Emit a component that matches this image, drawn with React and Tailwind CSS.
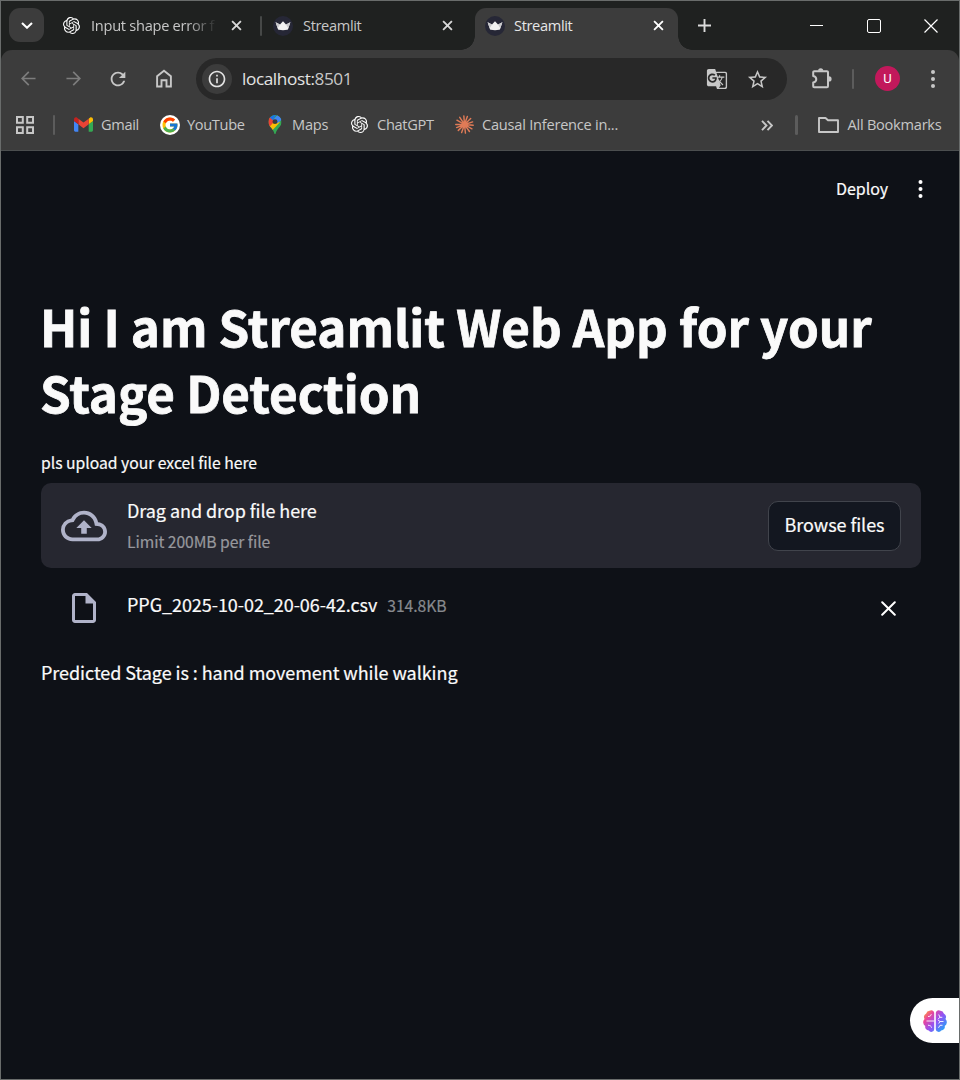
import React from "react";
import { SiOpenai } from "react-icons/si";
import { FcGoogle } from "react-icons/fc";
import { MdGTranslate, MdStarOutline, MdRefresh, MdInfoOutline } from "react-icons/md";

const Crown = () => (
  <svg className="size-5 shrink-0" viewBox="0 0 20 20">
    <circle cx="10" cy="10" r="10" fill="#262736" />
    <path d="M2.600 6.200 7 8.500 10 5.300l3 3.200 4.400-2.300-2.200 6.600c-.2.700-.5.900-1 1-2.800.5-5.600.5-8.400 0-.5-.1-.8-.3-1-1Z" fill="#f2f2f2" />
    <path d="M2.600 6.200 7 8.500l-2.300 3.800ZM17.400 6.200 13 8.500l2.300 3.800Z" fill="#c9c9cc" />
  </svg>
);

const Close = ({ className }) => (
  <svg className={className} viewBox="0 0 12 12" fill="none" stroke="currentColor" strokeWidth="2">
    <path d="m1.200 1.200 9.600 9.600m0-9.600-9.600 9.600" />
  </svg>
);

const Arrow = ({ className }) => (
  <svg className={className} viewBox="0 0 16 16" fill="none" stroke="currentColor" strokeWidth="1.800">
    <path d="M15.500 8H1.500M8.300 1 1.300 8l7 7" />
  </svg>
);

const Home = () => (
  <svg className="h-[19px] w-4" viewBox="0 0 16 19" fill="none" stroke="currentColor" strokeWidth="1.900">
    <path d="M1.100 17.500V7.300L8 1.700l6.900 5.600v10.200h-4.400v-6.300h-5v6.300Z" />
  </svg>
);

const Grid = () => (
  <svg className="size-[18px]" viewBox="0 0 18 18" fill="none" stroke="currentColor" strokeWidth="2">
    <path d="M1 1h5.800v5.800H1zM11.200 1H17v5.800h-5.800zM1 11.200h5.800V17H1zM11.200 11.200H17V17h-5.800z" />
  </svg>
);

const Gmail = () => (
  <svg className="h-[15px] w-[19px]" viewBox="52 42 88 66">
    <path fill="#4285f4" d="M58 108h14V74L52 59v43c0 3.320 2.690 6 6 6" />
    <path fill="#34a853" d="M120 108h14c3.320 0 6-2.690 6-6V59l-20 15" />
    <path fill="#fbbc04" d="M120 48v26l20-15v-8c0-7.420-8.470-11.650-14.400-7.200" />
    <path fill="#ea4335" d="M72 74V48l24 18 24-18v26L96 92" />
    <path fill="#c5221f" d="M52 51v8l20 15V48l-5.600-4.200c-5.940-4.450-14.400-.22-14.400 7.200" />
  </svg>
);

const Maps = () => (
  <svg className="h-[19px] w-[14px]" viewBox="0 0 14 20">
    <defs>
      <clipPath id="pin">
        <path d="M7 0a7 7 0 0 1 7 7c0 2.800-1.300 4.400-3 6.400C9.200 15.600 8.200 17.500 7.700 19.400c-.2.800-1.200.8-1.400 0C5.800 17.500 4.800 15.600 3 13.400 1.300 11.400 0 9.800 0 7a7 7 0 0 1 7-7Z" />
      </clipPath>
    </defs>
    <g clipPath="url(#pin)">
      <path fill="#34a853" d="M0 0h14v20H0z" />
      <path fill="#fbbc04" d="M0 12.500 9 3l3 5-9.500 10Z" />
      <path fill="#ea4335" d="M0 2 2 1.500 7 6 1 12.500-1 9Z" />
      <path fill="#1a73e8" d="M1.500 2.500 5 0h3L4.800 5.500Z" />
      <path fill="#4285f4" d="M4.800 5.400 9.400 0 14 2v3l-4.300 3.600Z" />
    </g>
    <circle cx="7" cy="7" r="2.600" fill="#3c3c3c" />
  </svg>
);

const Burst = () => (
  <svg className="size-[19px]" viewBox="0 0 20 20" fill="none" stroke="#e07b57" strokeWidth="1.500" strokeLinecap="round">
    <path d="M10 10 9.300.9M10 10l3-8.500M10 10l6.500-6.400M10 10l8.600-2.700M10 10l9.200.8M10 10l7.800 4.500M10 10l5.200 7.400M10 10l1 9.100M10 10l-3 8.500M10 10l-6.500 6.200M10 10l-8.300 3.200M10 10H.8M10 10 2 5.500M10 10 5 2.500" />
    <circle cx="10" cy="10" r="2.500" fill="#e07b57" stroke="none" />
  </svg>
);

const Puzzle = () => (
  <svg className="h-[21px] w-[22px]" viewBox="0 0 22 21">
    <path d="M3.200 3.200H16a1 1 0 0 1 1 1V18.200a1 1 0 0 1-1 1H3.200a1 1 0 0 1-1-1V14.400C6.300 13.800 6.300 8.700 2.200 8V4.200a1 1 0 0 1 1-1Z" fill="none" stroke="currentColor" strokeWidth="2" strokeLinejoin="round" />
    <path d="M7.100 2.800a2.600 2.600 0 0 1 5.200 0ZM18 8.300a2.600 2.600 0 0 1 0 5.200Z" fill="currentColor" />
  </svg>
);

const Dots = ({ className }) => (
  <svg className={className} viewBox="0 0 4 18" fill="currentColor">
    <circle cx="2" cy="2" r="2" />
    <circle cx="2" cy="9" r="2" />
    <circle cx="2" cy="16" r="2" />
  </svg>
);

const Brain = () => (
  <svg className="h-[22px] w-[24px]" viewBox="0 0 24 22">
    <defs>
      <linearGradient id="brain" x1="0" y1="0" x2="24" y2="22" gradientUnits="userSpaceOnUse">
        <stop offset="0.08" stopColor="#ff9a3d" />
        <stop offset=".27" stopColor="#e8459f" />
        <stop offset=".55" stopColor="#9153f5" />
        <stop offset=".9" stopColor="#22a7f8" />
      </linearGradient>
    </defs>
    <path fill="url(#brain)" d="M11.200 2.800v16.400a2.900 2.900 0 0 1-5.400 1.300 3.600 3.600 0 0 1-3.500-4.600A4.400 4.400 0 0 1 1.500 9a4.200 4.200 0 0 1 1.700-5.500A3.600 3.600 0 0 1 6.500.8a2.900 2.900 0 0 1 4.700 2ZM12.800 2.800v16.400a2.900 2.900 0 0 0 5.400 1.300 3.600 3.600 0 0 0 3.500-4.600A4.400 4.400 0 0 0 22.500 9a4.200 4.200 0 0 0-1.700-5.500A3.600 3.600 0 0 0 17.500.8a2.900 2.900 0 0 0-4.700 2Z" />
    <path fill="none" stroke="#fff" strokeWidth=".9" d="M3.500 11h7.500M8.300 4.200C8 6 6.500 6.600 5 6.500M5 15.200c2 .2 3.500 1 3.600 2.500M15.700 4.500l1.300 2.800h2.300M17 7.300l-1.800 1.500M20.500 11.500h-3.500l-2.200-1.700M17 11.500l-1.300 2M15.500 17.800l1.500-2.500h2.500" />
  </svg>
);

const Tab = ({ icon, title, active, className, titleClass }) => (
  <div className={"flex h-full items-center " + className}>
    {icon}
    <span className={"flex-1 whitespace-nowrap " + titleClass}>{title}</span>
    <Close className={active ? "size-[11px] shrink-0 text-white" : "size-[11px] shrink-0 text-[#d8d8d8]"} />
  </div>
);

function TabStrip() {
  return (
    <div className="flex h-[49px] bg-[#1f2120] pt-[7px] text-[14.600px] text-[#c7c7c7]">
      <button className="ml-2 flex h-[34px] w-[35px] items-center justify-center rounded-[11px] bg-[#3c3c3c] text-white">
        <svg className="h-[7px] w-3" viewBox="0 0 12 7" fill="none" stroke="currentColor" strokeWidth="2.100"><path d="m1 1 5 4.700L11 1" /></svg>
      </button>
      <div className="flex h-[35px] items-center">
        <Tab
          className="w-[216px] pr-[18px] pl-[18.500px]"
          icon={<SiOpenai className="size-[17px] shrink-0 text-white" />}
          title="Input shape error f"
          titleClass="ml-[11.500px] tracking-[-0.270px] [mask-image:linear-gradient(to_right,black_96px,transparent_126px)]"
        />
        <div className="h-5 w-0.5 rounded bg-[#464847]" />
        <Tab className="w-[213px] pr-[22px] pl-[11px]" icon={<Crown />} title="Streamlit" titleClass="ml-2.5 tracking-[-0.350px]" />
      </div>
      <div className="relative h-[42px] w-[203px] rounded-t-[11px] bg-[#3c3c3c] text-[#e6e6e6]">
        <div className="absolute bottom-0 -left-[14px] size-[14px] bg-[radial-gradient(circle_at_0_0,transparent_13.500px,#3c3c3c_14px)]" />
        <div className="absolute -right-[14px] bottom-0 size-[14px] bg-[radial-gradient(circle_at_100%_0,transparent_13.500px,#3c3c3c_14px)]" />
        <div className="h-[35px]">
          <Tab active className="pr-[14px] pl-2.5" icon={<Crown />} title="Streamlit" titleClass="ml-[9px] tracking-[-0.350px]" />
        </div>
      </div>
      <div className="flex h-[35px] flex-1 items-center justify-between pr-[21px] pl-[19.500px] text-white">
        <svg className="size-[13px] text-[#dcdcdc]" viewBox="0 0 13 13" stroke="currentColor" strokeWidth="1.900"><path d="M6.500 0v13M0 6.500h13" /></svg>
        <div className="flex items-center gap-[43.500px]">
          <div className="h-px w-[13px] bg-white" />
          <div className="size-[14px] rounded-[2px] border border-white" />
          <svg className="size-[14px]" viewBox="0 0 14 14" stroke="currentColor" strokeWidth="1.200"><path d="m.5.5 13 13m0-13-13 13" /></svg>
        </div>
      </div>
    </div>
  );
}

function Toolbar() {
  return (
    <div className="flex h-[58px] items-center text-[#c7c7c7]">
      <div className="flex w-[195px] items-center pb-px pl-5">
        <Arrow className="size-[15px] text-[#7d7d7d]" />
        <Arrow className="ml-[30px] size-[15px] rotate-180 text-[#7d7d7d]" />
        <MdRefresh className="ml-[26px] size-[22px]" />
        <span className="ml-[27px]"><Home /></span>
      </div>
      <div className="flex h-[42px] w-[591px] items-center rounded-full bg-[#282828] pr-[18px] pl-1.5">
        <div className="flex size-[30px] items-center justify-center rounded-full bg-[#3c3c3c] text-[#e3e3e3]">
          <MdInfoOutline className="size-5" />
        </div>
        <span className="ml-2.5 flex-1 text-[17.200px] tracking-[-0.400px] text-[#e3e3e3]">localhost:<span className="text-[#c7c7c7]">8501</span></span>
        <MdGTranslate className="size-[22px]" />
        <MdStarOutline className="ml-[18px] size-[23px]" />
      </div>
      <div className="flex flex-1 items-center pb-px pl-6">
        <Puzzle />
        <div className="ml-[19px] h-5 w-0.5 rounded bg-[#5c5c5c]" />
        <div className="ml-[21px] flex size-[25px] items-center justify-center rounded-full bg-[#c2185b] font-[Roboto] text-[13px] text-white">U</div>
        <Dots className="ml-[30.500px] h-[18px] w-1" />
      </div>
    </div>
  );
}

const Bookmark = ({ icon, label, className, labelClass }) => (
  <div className={"flex items-center " + className}>
    {icon}
    <span className={"pb-px whitespace-nowrap " + labelClass}>{label}</span>
  </div>
);

function Bookmarks() {
  return (
    <div className="flex h-[42px] items-start text-[14.600px] text-[#c7c7c7]">
      <div className="flex h-[34px] w-full items-center">
        <div className="ml-[15px]"><Grid /></div>
        <div className="ml-[19px] h-5 w-0.5 rounded bg-[#5c5c5c]" />
        <Bookmark className="ml-[19px] w-[86px]" icon={<Gmail />} label="Gmail" labelClass="ml-2 tracking-[-0.350px]" />
        <Bookmark
          className="w-[108px]"
          icon={<span className="flex size-5 items-center justify-center rounded-full bg-white"><FcGoogle className="size-[18px]" /></span>}
          label="YouTube"
          labelClass="ml-[7px] tracking-[-0.350px]"
        />
        <Bookmark className="w-[83px]" icon={<Maps />} label="Maps" labelClass="ml-2.5 tracking-[-0.250px]" />
        <Bookmark className="w-[104px]" icon={<SiOpenai className="size-[17px] text-white" />} label="ChatGPT" labelClass="ml-[9px] tracking-[-0.300px]" />
        <Bookmark className="flex-1" icon={<Burst />} label="Causal Inference in..." labelClass="ml-2 tracking-[-0.230px]" />
        <svg className="h-[11px] w-3" viewBox="0 0 12 11" fill="none" stroke="currentColor" strokeWidth="1.900"><path d="m1 .8 4.500 4.700L1 10.200M6.500.8 11 5.500l-4.500 4.700" /></svg>
        <div className="ml-[22px] h-5 w-[3px] rounded bg-[#5c5c5c]" />
        <svg className="ml-5 h-4 w-[21px]" viewBox="0 0 21 16" fill="none" stroke="currentColor" strokeWidth="1.900" strokeLinejoin="round"><path d="M1 1h6.500L10 3.300h10V15H1Z" /></svg>
        <span className="mr-[17.500px] ml-[9px] pb-px tracking-[-0.250px] whitespace-nowrap">All Bookmarks</span>
      </div>
    </div>
  );
}

function StreamlitPage() {
  return (
    <main className="relative flex-1 bg-[#0e1117] font-['Noto_Sans_CJK_SC',sans-serif] text-[18px] tracking-[-0.060px] text-[#fafafa] [-webkit-text-stroke:0.200px]">
      <header className="flex h-[75px] items-center justify-end pr-9">
        <span className="pb-0.5 text-[16px] leading-6">Deploy</span>
        <Dots className="ml-[30px] h-[18px] w-[5px] text-white" />
      </header>
      <div className="flex flex-col pr-[38px] pl-10">
        <h1 className="mt-[67px] -ml-px text-[49.300px] leading-[66px] font-bold tracking-[-0.030px] whitespace-nowrap [-webkit-text-stroke:0.800px]">
          Hi I am Streamlit Web App for your
          <br />
          Stage Detection
        </h1>
        <label className="mt-[26px] text-[15.700px] leading-6 tracking-normal">pls upload your excel file here</label>
        <section className="mt-2 flex h-[85px] items-center rounded-[10px] bg-[#262730] px-5">
          <svg className="size-[46px] text-[#b0b3c9]" viewBox="0 0 24 24" fill="currentColor">
            <path d="M19.350 10.040A7.490 7.490 0 0 0 12 4C9.110 4 6.600 5.640 5.350 8.040A5.994 5.994 0 0 0 0 14c0 3.310 2.690 6 6 6h13c2.760 0 5-2.240 5-5 0-2.640-2.050-4.780-4.650-4.960ZM19 18H6c-2.210 0-4-1.790-4-4 0-2.050 1.530-3.760 3.560-3.970l1.070-.11.5-.95A5.469 5.469 0 0 1 12 6c2.620 0 4.880 1.860 5.390 4.430l.3 1.500 1.530.11A2.980 2.980 0 0 1 22 15c0 1.650-1.350 3-3 3ZM8 13h2.550v3h2.900v-3H16l-4-4-4 4Z" />
          </svg>
          <div className="ml-5 flex flex-1 flex-col gap-0.5">
            <span className="leading-[30px]">Drag and drop file here</span>
            <span className="text-[15.700px] leading-[30px] text-[#97989d]">Limit 200MB per file</span>
          </div>
          <button className="h-[50px] w-[133px] rounded-[10px] border border-[#41444c] bg-[#131720] pb-0.5 whitespace-nowrap">Browse files</button>
        </section>
        <div className="mt-[20px] flex h-10 items-center pr-[25px] pl-[25px]">
          <svg className="size-9 text-[#b0b3c9]" viewBox="0 0 24 24" fill="currentColor">
            <path d="M14 2H6c-1.100 0-1.990.9-1.990 2L4 20c0 1.100.89 2 1.990 2H18c1.100 0 2-.9 2-2V8l-6-6ZM6 20V4h7v5h5v11H6Z" />
          </svg>
          <div className="mb-1.5 ml-[25px] flex flex-1 items-baseline leading-[30px]">
            <span>PPG_2025-10-02_20-06-42.csv</span>
            <span className="ml-2.5 text-[15.700px] text-[#87898e]">314.8KB</span>
          </div>
          <svg className="size-[15px] text-white" viewBox="0 0 15 15" stroke="currentColor" strokeWidth="2" strokeLinecap="round"><path d="m1.200 1.200 12.600 12.600m0-12.600L1.200 13.800" /></svg>
        </div>
        <p className="mt-[29px] leading-[30px]">Predicted Stage is : hand movement while walking</p>
      </div>
      <div className="absolute right-0 bottom-9 flex h-[45px] w-[49px] items-center rounded-l-full bg-white pl-[13px]">
        <Brain />
      </div>
    </main>
  );
}

export default function App() {
  return (
    <div className="flex h-[1080px] w-[960px] flex-col overflow-hidden border border-[#696c6b] bg-[#1f2120] font-['Open_Sans',sans-serif]">
      <TabStrip />
      <div className="h-[101px] rounded-t-[11px] border-b border-[#4b4e4f] bg-[#3c3c3c]">
        <Toolbar />
        <Bookmarks />
      </div>
      <StreamlitPage />
    </div>
  );
}
